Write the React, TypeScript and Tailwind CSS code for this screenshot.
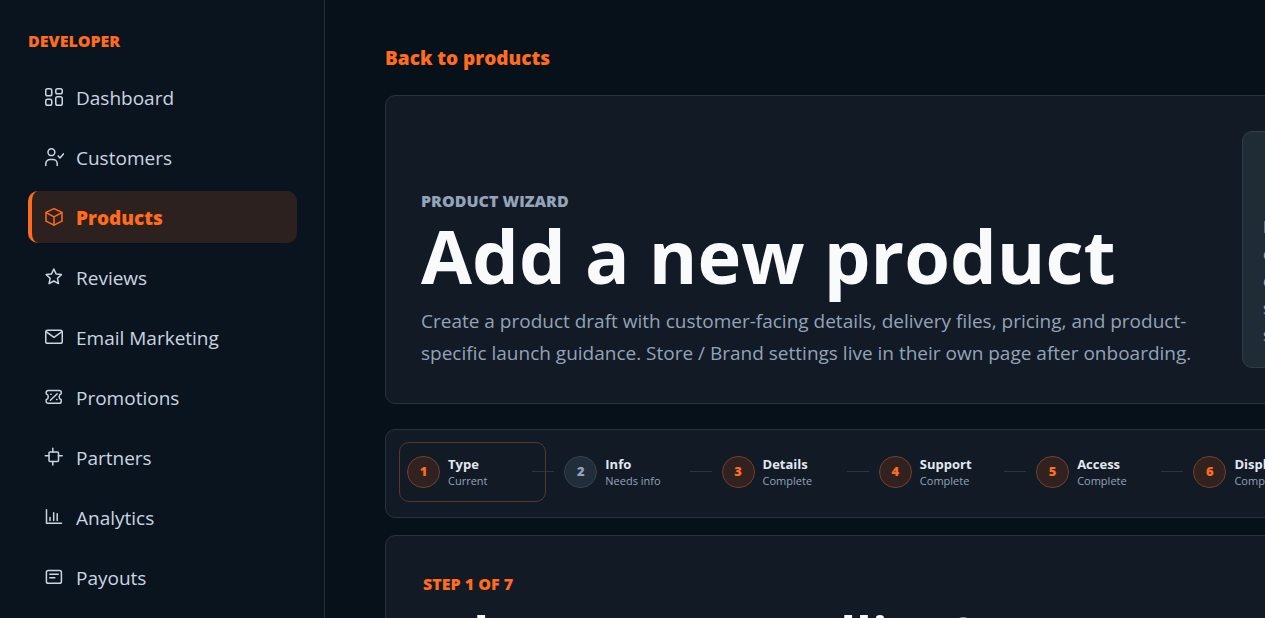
import React from 'react';

const NAV_ITEMS = [
  {
    label: 'Dashboard',
    icon: (
      <>
        <rect x="1.75" y="1.75" width="6" height="7" rx="1.8" />
        <rect x="11.75" y="1.75" width="6.5" height="5" rx="1.8" />
        <rect x="1.75" y="12.25" width="6" height="6" rx="1.8" />
        <rect x="11.75" y="9.75" width="6.5" height="8.5" rx="1.8" />
      </>
    ),
  },
  {
    label: 'Customers',
    icon: (
      <>
        <circle cx="7.4" cy="5.2" r="3.4" />
        <path d="M1.8 18.5v-1.8a4.2 4.2 0 0 1 4.2-4.2h3a4.2 4.2 0 0 1 4.2 4.2v1.8" />
        <path d="m14.2 9 1.8 2 3.6-4.2" />
      </>
    ),
  },
  {
    label: 'Products',
    active: true,
    icon: (
      <>
        <path d="M10 1.6 18 5.4v8.8l-8 4-8-4V5.4z" />
        <path d="M2.2 5.6 10 9.8l7.8-4.2M10 9.8v8.2" />
      </>
    ),
  },
  {
    label: 'Reviews',
    icon: <path d="m9.8 2 2.3 4.9 5.3.7-3.9 3.7 1 5.3-4.7-2.6-4.7 2.6 1-5.3-3.9-3.7 5.3-.7z" />,
  },
  {
    label: 'Email Marketing',
    icon: (
      <>
        <rect x="1.75" y="3.25" width="16.5" height="13" rx="1.8" />
        <path d="m2.4 4.8 7.6 5.6 7.6-5.6" />
      </>
    ),
  },
  {
    label: 'Promotions',
    icon: (
      <>
        <path d="M4 3.6h11.4a1.8 1.8 0 0 1 1.8 1.8v1.4a3.2 3.2 0 0 0 0 6v1.6a1.8 1.8 0 0 1-1.8 1.8H4a1.8 1.8 0 0 1-1.8-1.8v-1.6a3.2 3.2 0 0 0 0-6V5.4A1.8 1.8 0 0 1 4 3.6z" />
        <path d="m6.4 13.2 6.800-6.400M6.800 7.200h.4M12.600 12.600h.4" />
      </>
    ),
  },
  {
    label: 'Partners',
    icon: (
      <>
        <rect x="5" y="5" width="9.5" height="9.5" rx="1" />
        <path d="M8.8 1.3V5M8.8 14.5v3.5M1.3 8.8H5M14.5 8.8h3.7" />
      </>
    ),
  },
  {
    label: 'Analytics',
    icon: <path d="M2.5 2.8v13.4h15M6 13.6v-3M9.7 13.6V5.8M13.2 13.6V6.8" />,
  },
  {
    label: 'Payouts',
    icon: (
      <>
        <rect x="2.4" y="3.6" width="15" height="12.6" rx="1.8" />
        <path d="M5.8 7.2h8.4M5.8 10.8h5" />
      </>
    ),
  },
];

const STEPS = [
  { title: 'Type', status: 'Current' },
  { title: 'Info', status: 'Needs info' },
  { title: 'Details', status: 'Complete' },
  { title: 'Support', status: 'Complete' },
  { title: 'Access', status: 'Complete' },
  { title: 'Display', status: 'Complete' },
  { title: 'Review', status: 'Complete' },
];

const Sidebar: React.FC = () => {
  return (
    <aside className="w-[325px] shrink-0 border-r border-[#28323c] bg-[#0a141f] pt-[29px] pr-[27px] pl-7">
      <p className="text-base leading-6 font-extrabold text-[#ff6b1f]">DEVELOPER</p>
      <nav className="mt-[18px] flex flex-col gap-2">
        {NAV_ITEMS.map((item) => (
          <a
            key={item.label}
            href="#"
            className={
              item.active
                ? 'flex h-[52px] items-center gap-3 rounded-[10px] border-l-4 border-[#ff6b1f] bg-[#2d211f] pl-3 font-extrabold text-[#ff6b1f]'
                : 'flex h-[52px] items-center gap-3 rounded-[10px] border-l-4 border-transparent pl-3 text-[#cbd5e1]'
            }
          >
            <svg
              viewBox="0 0 20 20"
              className="h-5 w-5 shrink-0"
              fill="none"
              stroke="currentColor"
              strokeWidth="1.5"
              strokeLinecap="round"
              strokeLinejoin="round"
              aria-hidden="true"
            >
              {item.icon}
            </svg>
            <span className="pt-[2px] text-[19px] leading-7">{item.label}</span>
          </a>
        ))}
      </nav>
    </aside>
  );
};

const Hero: React.FC = () => {
  return (
    <section className="mt-[23px] grid grid-cols-[1fr_226px] items-end gap-6 rounded-[10px] border border-[#28323c] bg-[#111a25] px-[35px] pt-[35px] pb-[34px]">
      <div>
        <p className="text-base leading-6 font-extrabold text-[#94a3b8]">PRODUCT WIZARD</p>
        <h1 className="pb-[7px] text-[74px] leading-[85px] font-bold text-[#f8fafc]">Add a new product</h1>
        <p className="text-[19px] leading-8 text-[#94a3b8]">
          Create a product draft with customer-facing details, delivery files, pricing, and product-
          <wbr />
          specific launch guidance. Store / Brand settings live in their own page after onboarding.
        </p>
      </div>
      <div className="mb-px flex h-[237px] flex-col justify-end rounded-[10px] border border-[#303c47] bg-[#202c35] px-5 pb-[18px] text-base leading-[27px] text-[#94a3b8]">
        <span className="font-bold">Product drafts</span>
        <span>can be edited and</span>
        <span>changed before you</span>
        <span>submit them to the</span>
        <span>store for review.</span>
      </div>
    </section>
  );
};

const Steps: React.FC = () => {
  return (
    <ol className="mt-[25px] grid grid-cols-7 gap-[10px] rounded-[10px] border border-[#28323c] bg-[#111a25] px-[13px] pt-3 pb-[15px]">
      {STEPS.map((step, index) => (
        <li key={step.title} className="relative">
          <button
            type="button"
            className={
              index === 0
                ? 'flex h-[60px] w-full items-center gap-2 rounded-[10px] border border-[#5b3528] px-[7px] text-left'
                : 'flex h-[60px] w-full items-center gap-2 rounded-[10px] border border-transparent px-[7px] text-left'
            }
          >
            <span
              className={
                index === 1
                  ? 'flex h-8 w-[33px] shrink-0 items-center justify-center rounded-full border border-[#33404d] bg-[#222d3a] text-[13px] font-extrabold text-[#94a3b8]'
                  : 'flex h-8 w-[33px] shrink-0 items-center justify-center rounded-full border border-[#73402a] bg-[#32221f] text-[13px] font-extrabold text-[#ff6b1f]'
              }
            >
              {index + 1}
            </span>
            <span className="flex flex-col">
              <span className="text-[13px] leading-[18px] font-bold text-[#e2e8f0]">{step.title}</span>
              <span className="text-[11px] leading-4 text-[#94a3b8]">{step.status}</span>
            </span>
          </button>
          {index < STEPS.length - 1 && (
            <span className="absolute top-[29px] -right-2 h-px w-[22px] bg-[#2b363f]" />
          )}
        </li>
      ))}
    </ol>
  );
};

const App: React.FC = () => {
  return (
    <div className="flex h-screen overflow-hidden bg-[#07111a] font-['Open_Sans','Noto_Sans',sans-serif]">
      <Sidebar />
      <main className="min-w-0 flex-1 overflow-hidden pt-11 pl-[60px]">
        <div className="min-w-[1119px]">
          <a href="#" className="block text-[19px] leading-7 font-extrabold text-[#ff6b1f]">
            Back to products
          </a>
          <Hero />
          <Steps />
          <section className="mt-[17px] rounded-[10px] border border-[#28323c] bg-[#111a25] px-[37px] py-9">
            <p className="text-base leading-6 font-extrabold text-[#ff6b1f]">STEP 1 OF 7</p>
            <h2 className="mt-[7px] text-[52px] leading-[64px] font-bold text-[#f8fafc]">What are you selling?</h2>
          </section>
        </div>
      </main>
    </div>
  );
};

export default App;
